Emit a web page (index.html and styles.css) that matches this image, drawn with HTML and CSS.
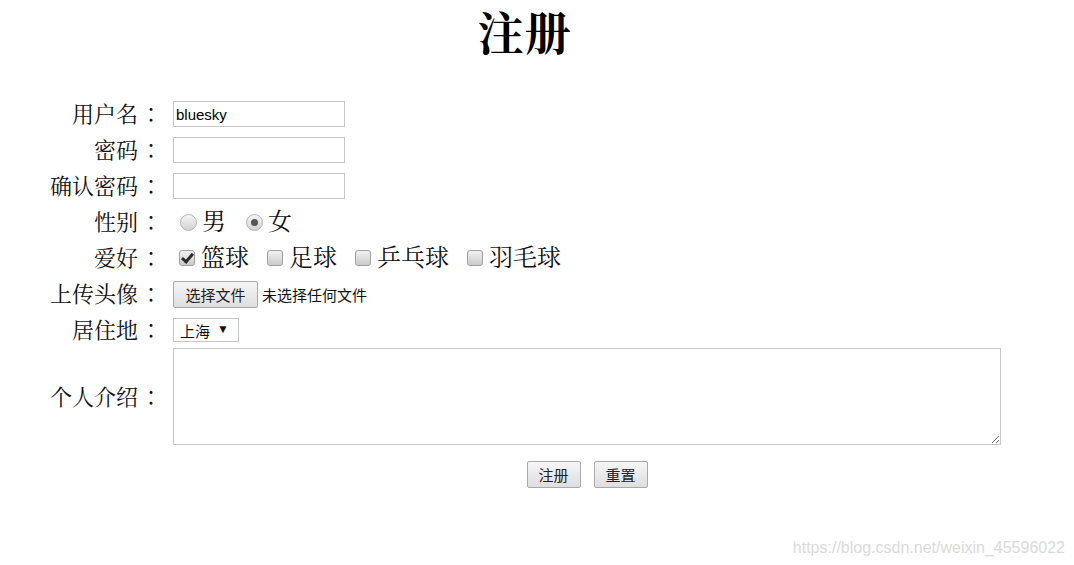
FILE: index.html
```html
<!DOCTYPE html>
<html lang="zh-CN">
<head>
<meta charset="utf-8">
<title>注册</title>
<link rel="stylesheet" href="styles.css">
</head>
<body>
<div class="page">
  <h1 class="title">注册</h1>
  <form class="form">
    <div class="row">
      <label class="label">用户名<span class="colon" lang="ja">：</span></label>
      <div class="field"><input class="text" type="text" value="bluesky"></div>
    </div>
    <div class="row">
      <label class="label">密码<span class="colon" lang="ja">：</span></label>
      <div class="field"><input class="text" type="password"></div>
    </div>
    <div class="row">
      <label class="label">确认密码<span class="colon" lang="ja">：</span></label>
      <div class="field"><input class="text" type="password"></div>
    </div>
    <div class="row">
      <label class="label">性别<span class="colon" lang="ja">：</span></label>
      <div class="field choices">
        <label class="choice radio-choice"><input class="radio" type="radio" name="sex"><span>男</span></label>
        <label class="choice radio-choice"><input class="radio" type="radio" name="sex" checked><span>女</span></label>
      </div>
    </div>
    <div class="row">
      <label class="label">爱好<span class="colon" lang="ja">：</span></label>
      <div class="field choices">
        <label class="choice"><input class="check" type="checkbox" checked><span>篮球</span></label>
        <label class="choice"><input class="check" type="checkbox"><span>足球</span></label>
        <label class="choice"><input class="check" type="checkbox"><span>乒乓球</span></label>
        <label class="choice"><input class="check" type="checkbox"><span>羽毛球</span></label>
      </div>
    </div>
    <div class="row">
      <label class="label">上传头像<span class="colon" lang="ja">：</span></label>
      <div class="field">
        <label class="file"><input class="file-input" type="file"><span class="file-btn">选择文件</span><span class="file-text">未选择任何文件</span></label>
      </div>
    </div>
    <div class="row">
      <label class="label">居住地<span class="colon" lang="ja">：</span></label>
      <div class="field">
        <span class="select-wrap"><select class="select"><option>上海</option><option>北京</option><option>广州</option></select></span>
      </div>
    </div>
    <div class="row row-area">
      <label class="label">个人介绍<span class="colon" lang="ja">：</span></label>
      <div class="field"><textarea class="area"></textarea></div>
    </div>
    <div class="row row-buttons">
      <div class="label"></div>
      <div class="field buttons">
        <button class="btn" type="submit">注册</button>
        <button class="btn" type="reset">重置</button>
      </div>
    </div>
  </form>
</div>
<div class="watermark">https://blog.csdn.net/weixin_45596022</div>
</body>
</html>
```
FILE: styles.css
```css
html, body {
  margin: 0;
  padding: 0;
  background: #fff;
}
body {
  font-family: "Liberation Serif", "Noto Serif CJK SC", "Noto Sans CJK SC", serif;
  color: #111;
  width: 1074px;
  height: 565px;
  overflow: hidden;
  position: relative;
}
.page {
  width: 953px;
  margin-left: 48px;
}
.title {
  margin: 0 0 28px;
  height: 68px;
  line-height: 70px;
  text-align: center;
  font-size: 46px;
  font-weight: bold;
  color: #000;
  letter-spacing: 1px;
}
.form {
  display: flex;
  flex-direction: column;
}
.row {
  display: flex;
  align-items: center;
  height: 36px;
}
.label {
  width: 112px;
  flex: none;
  margin-right: 13px;
  text-align: right;
  font-size: 22px;
  line-height: 26px;
  white-space: nowrap;
}
.colon {
  position: relative;
  left: 2px;
  font-family: "Noto Serif CJK JP", "Noto Sans CJK JP", serif;
}
.field {
  flex: 1;
  display: flex;
  align-items: center;
}
.text {
  box-sizing: border-box;
  width: 172px;
  height: 26px;
  margin: 0;
  border: 1px solid #c6c6c6;
  padding: 0 2px;
  font-family: "Liberation Sans", Arial, sans-serif;
  font-size: 15px;
  color: #000;
  outline: none;
}
.choice {
  display: flex;
  align-items: center;
  font-size: 24px;
  margin-right: 12px;
}
.radio-choice {
  margin-right: 13px;
}
.choice span {
  line-height: 28px;
}
.radio {
  appearance: none;
  -webkit-appearance: none;
  flex: none;
  box-sizing: border-box;
  width: 17px;
  height: 17px;
  margin: 0 5px 0 7px;
  border-radius: 50%;
  border: 1px solid #b4b4b4;
  background: linear-gradient(#f6f6f6, #d2d2d2);
  position: relative;
}
.radio:checked::after {
  content: "";
  position: absolute;
  left: 4px;
  top: 4px;
  width: 7px;
  height: 7px;
  border-radius: 50%;
  background: #555;
}
.check {
  appearance: none;
  -webkit-appearance: none;
  flex: none;
  box-sizing: border-box;
  width: 16px;
  height: 16px;
  margin: 0 6px;
  border-radius: 3px;
  border: 1px solid #a0a0a0;
  background: linear-gradient(#f2f2f2, #cacaca);
  position: relative;
}
.check:checked::after {
  content: "";
  position: absolute;
  left: 4px;
  top: 0;
  width: 4px;
  height: 9px;
  border: solid #2a2a2a;
  border-width: 0 3px 3px 0;
  transform: rotate(40deg);
}
.file {
  display: flex;
  align-items: center;
  font-family: "Noto Sans CJK SC", "Liberation Sans", sans-serif;
  font-size: 15px;
}
.file-input {
  display: none;
}
.file-btn {
  box-sizing: border-box;
  width: 85px;
  height: 27px;
  line-height: 25px;
  text-align: center;
  border: 1px solid #a9a9a9;
  border-radius: 2px;
  background: linear-gradient(#f6f6f6, #dedede);
  color: #222;
}
.file-text {
  margin-left: 4px;
  color: #111;
}
.select-wrap {
  position: relative;
  display: inline-block;
}
.select-wrap::after {
  content: "▼";
  position: absolute;
  right: 10px;
  top: 4px;
  font-size: 12px;
  color: #111;
  pointer-events: none;
}
.select {
  appearance: none;
  -webkit-appearance: none;
  box-sizing: border-box;
  width: 66px;
  height: 24px;
  margin: 0;
  padding: 0 0 0 6px;
  border: 1px solid #c6c6c6;
  border-radius: 0;
  background: #fff;
  font-family: "Noto Sans CJK SC", sans-serif;
  font-size: 15px;
  color: #111;
  outline: none;
}
.row-area {
  height: 97px;
}
.area {
  box-sizing: border-box;
  width: 828px;
  height: 97px;
  margin: 0;
  border: 1px solid #c6c6c6;
  outline: none;
  font-size: 14px;
}
.row-buttons {
  height: 27px;
  margin-top: 16px;
}
.buttons {
  justify-content: center;
  gap: 13px;
}
.btn {
  box-sizing: border-box;
  width: 54px;
  height: 27px;
  margin: 0;
  padding: 0;
  border: 1px solid #a9a9a9;
  border-radius: 2px;
  background: linear-gradient(#f6f6f6, #dedede);
  font-family: "Noto Sans CJK SC", sans-serif;
  font-size: 15px;
  color: #222;
}
.watermark {
  position: absolute;
  right: 9px;
  top: 539px;
  font-family: "Liberation Sans", Arial, sans-serif;
  font-size: 16px;
  color: #dadada;
}
```
